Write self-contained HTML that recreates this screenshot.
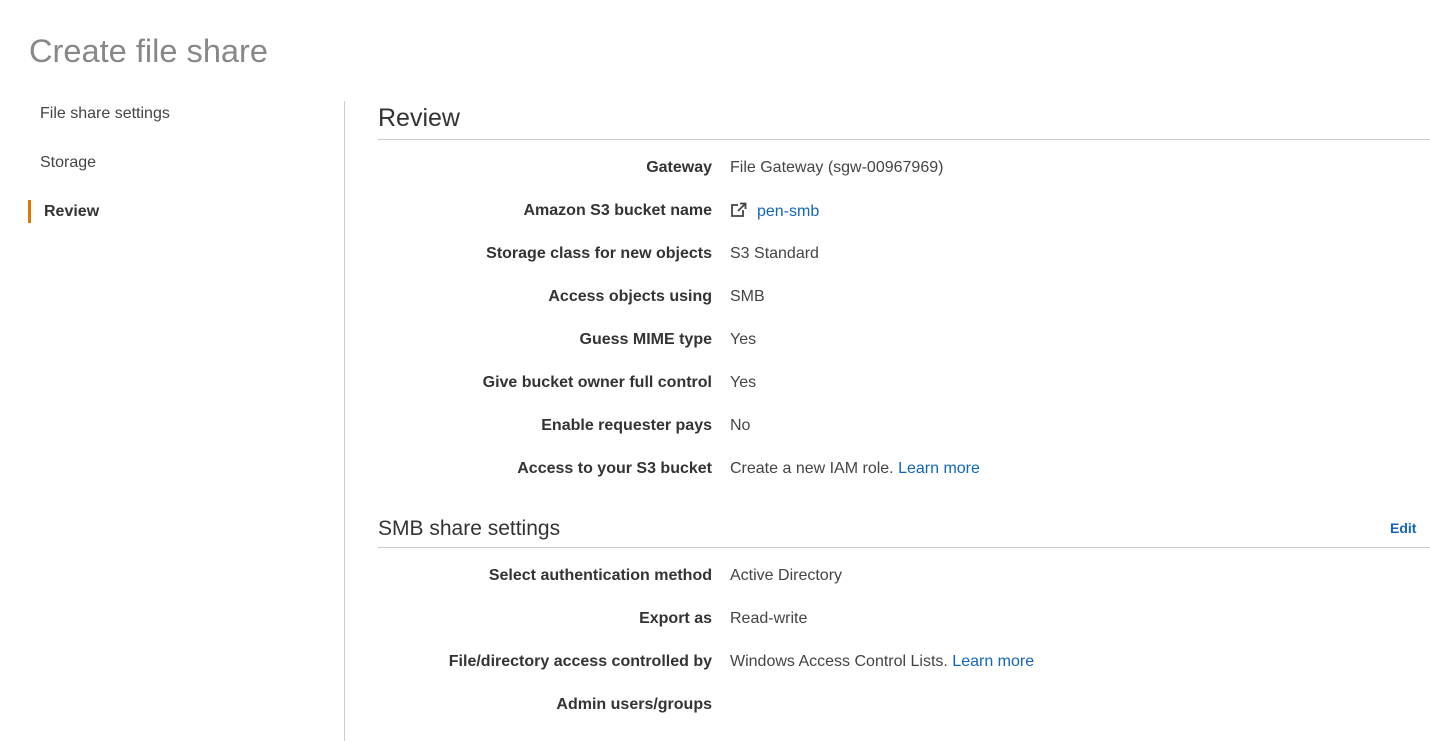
<!DOCTYPE html>
<html><head><style>
body{margin:0;width:1430px;height:741px;background:#fff;font-family:"Liberation Sans",Arial,sans-serif;position:relative;overflow:hidden;color:#444}
.a{position:absolute;white-space:nowrap}
h1{position:absolute;left:29px;top:32px;margin:0;font-size:32.6px;font-weight:normal;color:#888}
.nav{font-size:16px;color:#444;left:40px}
.lab{font-size:16px;font-weight:bold;color:#333;right:718px;text-align:right}
.val{font-size:16px;color:#444;left:730px}
.lnk{color:#1166bb}
.hd{font-size:23px;color:#333;left:378px}
.ln{position:absolute;left:378px;width:1052px;height:1px;background:#ccc}
</style></head><body>
<h1>Create file share</h1>
<div class="a nav" style="top:105px">File share settings</div>
<div class="a nav" style="top:154px">Storage</div>
<div class="a" style="left:28px;top:200px;width:3px;height:23px;background:#e07700"></div>
<div class="a nav" style="left:44px;top:203px;font-weight:bold;color:#333">Review</div>
<div class="a" style="left:344px;top:101px;width:1px;height:640px;background:#ccc"></div>
<div class="a hd" style="top:104px;font-size:25px">Review</div>
<div class="ln" style="top:139px"></div>
<div class="a lab" style="top:159px">Gateway</div><div class="a val" style="top:159px">File Gateway (sgw-00967969)</div>
<div class="a lab" style="top:202px">Amazon S3 bucket name</div><div class="a val" style="top:202px"><svg width="18" height="16" viewBox="0 0 18 16" style="vertical-align:-2px"><path d="M8 3H2v11h11V8" fill="none" stroke="#444" stroke-width="1.8"/><path d="M10 1.5h5.5V7M15.5 1.5L8 9" fill="none" stroke="#444" stroke-width="1.8"/></svg><span class="lnk" style="margin-left:9px">pen-smb</span></div>
<div class="a lab" style="top:245px">Storage class for new objects</div><div class="a val" style="top:245px">S3 Standard</div>
<div class="a lab" style="top:288px">Access objects using</div><div class="a val" style="top:288px">SMB</div>
<div class="a lab" style="top:331px">Guess MIME type</div><div class="a val" style="top:331px">Yes</div>
<div class="a lab" style="top:374px">Give bucket owner full control</div><div class="a val" style="top:374px">Yes</div>
<div class="a lab" style="top:417px">Enable requester pays</div><div class="a val" style="top:417px">No</div>
<div class="a lab" style="top:460px">Access to your S3 bucket</div><div class="a val" style="top:460px">Create a new IAM role. <span class="lnk">Learn more</span></div>
<div class="a hd" style="top:517px;font-size:21px">SMB share settings</div>
<div class="a" style="left:1390px;top:520px;font-size:14px;font-weight:bold;color:#1166bb">Edit</div>
<div class="ln" style="top:547px"></div>
<div class="a lab" style="top:567px">Select authentication method</div><div class="a val" style="top:567px">Active Directory</div>
<div class="a lab" style="top:610px">Export as</div><div class="a val" style="top:610px">Read-write</div>
<div class="a lab" style="top:653px">File/directory access controlled by</div><div class="a val" style="top:653px">Windows Access Control Lists. <span class="lnk">Learn more</span></div>
<div class="a lab" style="top:696px">Admin users/groups</div>
</body></html>
